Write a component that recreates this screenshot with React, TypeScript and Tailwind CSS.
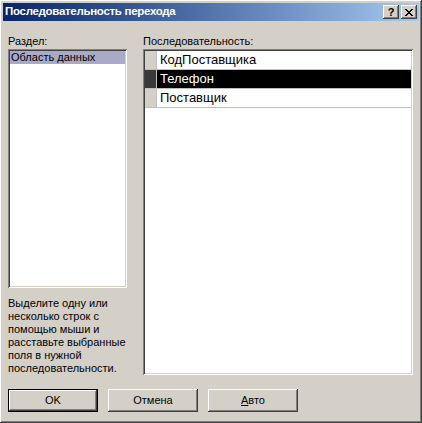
import React from "react";

const raised =
  "shadow-[inset_-1px_-1px_#404040,inset_1px_1px_#ffffff,inset_-2px_-2px_#808080,inset_2px_2px_#d4d0c8]";
const sunken =
  "shadow-[inset_1px_1px_#808080,inset_-1px_-1px_#ffffff,inset_2px_2px_#404040,inset_-2px_-2px_#d4d0c8]";

const fields = ["КодПоставщика", "Телефон", "Поставщик"];
const helpLines = [
  "Выделите одну или",
  "несколько строк с",
  "помощью мыши и",
  "расставьте выбранные",
  "поля в нужной",
  "последовательности.",
];

function TitleButton({ children }: { children: React.ReactNode }) {
  return (
    <div
      className={`w-4 h-[14px] bg-[#d4d0c8] flex items-center justify-center ${raised}`}
    >
      {children}
    </div>
  );
}

function DialogButton({
  children,
  isDefault,
}: {
  children: React.ReactNode;
  isDefault?: boolean;
}) {
  return (
    <div
      className={`w-[90px] h-[23px] flex items-center justify-center text-[11px] ${
        isDefault ? "border border-black" : ""
      }`}
    >
      <div className={`w-full h-full flex items-center justify-center ${raised}`}>
        {children}
      </div>
    </div>
  );
}

export default function App() {
  return (
    <div
      className={`w-[422px] h-[423px] bg-[#d4d0c8] p-[3px] flex flex-col text-black ${raised}`}
      style={{ fontFamily: '"Liberation Sans", Arial, sans-serif' }}
    >
      {/* title bar */}
      <div className="h-[18px] bg-linear-to-r from-[#0a246a] to-[#a6caf0] flex items-center justify-between pl-[2px] pr-[2px]">
        <span className="text-white font-bold text-[11.5px] tracking-[-0.3px] leading-none">
          Последовательность перехода
        </span>
        <div className="flex gap-[2px]">
          <TitleButton>
            <span className="text-[11px] font-bold leading-none">?</span>
          </TitleButton>
          <TitleButton>
            <svg width="8" height="7" viewBox="0 0 8 7">
              <path d="M0 0L7 7M1 0L8 7M7 0L0 7M8 0L1 7" stroke="#000" strokeWidth="1" />
            </svg>
          </TitleButton>
        </div>
      </div>

      <div className="flex pl-[5px] pt-[14px] gap-4 text-[11px] leading-[13px]">
        {/* left column */}
        <div className="w-[119px] flex flex-col">
          <div className="h-[14px]">Раздел:</div>
          <div className={`h-[239px] bg-white p-[2px] ${sunken}`}>
            <div className="h-[13px] bg-[#a8aac8] pl-[1px] leading-[13px]">
              Область данных
            </div>
          </div>
          <div className="mt-[9px] whitespace-nowrap">
            {helpLines.map((l) => (
              <div key={l}>{l}</div>
            ))}
          </div>
        </div>

        {/* right column */}
        <div className="w-[270px] flex flex-col">
          <div className="h-[14px]">Последовательность:</div>
          <div className={`h-[326px] bg-white p-[2px] ${sunken}`}>
            {fields.map((f, i) => {
              const sel = i === 1;
              return (
                <div
                  key={f}
                  className={`h-[19px] flex border-b border-[#c0c0c0] ${
                    sel ? "bg-black text-white" : ""
                  }`}
                >
                  <div
                    className={`w-[12px] shrink-0 border-r border-[#c0c0c0] ${
                      sel ? "bg-[#3a3a3a]" : "bg-[#d4d0c8]"
                    }`}
                  />
                  <div className="pl-[3px] text-[13px] leading-[18px]">{f}</div>
                </div>
              );
            })}
          </div>
        </div>
      </div>

      {/* buttons */}
      <div className="flex gap-[10px] pl-[5px] mt-[14px]">
        <DialogButton isDefault>OK</DialogButton>
        <DialogButton>Отмена</DialogButton>
        <DialogButton>
          <span>
            <u>А</u>вто
          </span>
        </DialogButton>
      </div>
    </div>
  );
}
